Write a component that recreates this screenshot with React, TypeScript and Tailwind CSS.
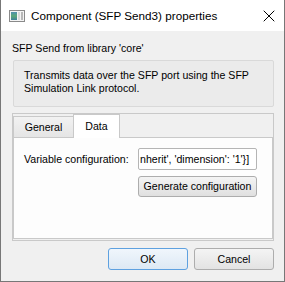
import { X } from 'lucide-react'

function WindowIcon() {
  return (
    <svg width="16" height="12" viewBox="0 0 16 12" className="shrink-0">
      <rect x="0.5" y="0.5" width="15" height="11" fill="#f4f4f4" stroke="#8a8a8a" />
      <defs>
        <linearGradient id="ic" x1="0" y1="0" x2="0" y2="1">
          <stop offset="0" stopColor="#4f8fb0" />
          <stop offset="0.5" stopColor="#5aa878" />
          <stop offset="1" stopColor="#3f7f9a" />
        </linearGradient>
      </defs>
      <rect x="2" y="2" width="6" height="8" fill="url(#ic)" />
      <rect x="9" y="2" width="2" height="8" fill="#d8d8d8" />
      <rect x="12" y="2" width="2" height="8" fill="#b8b8b8" />
    </svg>
  )
}

export default function App() {
  const font = { fontFamily: '"Liberation Sans", Arial, sans-serif' }
  return (
    <div className="w-[285px] h-[282px] flex flex-col border-x border-b border-[#777777] bg-[#f0f0f0] text-black overflow-hidden" style={font}>
      {/* title bar */}
      <div className="h-[31px] bg-white flex items-center pl-[8px] pr-[5px] shrink-0">
        <WindowIcon />
        <span className="ml-[6px] text-[11.7px] leading-none">Component (SFP Send3) properties</span>
        <X className="ml-auto w-[20px] h-[20px]" strokeWidth={1.2} />
      </div>

      <div className="flex-1 pl-[11px] pr-[10px] pt-[11px] text-[10.6px] leading-[13px]">
        <div>SFP Send from library 'core'</div>

        <div className="mt-[5px] ml-[1px] h-[47px] border border-[#d9d9d9] rounded-[2px] bg-[#ebebeb] pl-[10px] pt-[8px]">
          Transmits data over the SFP port using the SFP
          <br />
          Simulation Link protocol.
        </div>

        <div className="mt-[6px] h-[128px] border border-[#c9c9c9] flex flex-col">
          <div className="flex items-end h-[23px] shrink-0">
            <div className="w-[61px] h-[21px] border border-b-0 border-[#c9c9c9] bg-gradient-to-b from-[#f2f2f2] to-[#e5e5e5] flex items-center justify-center">
              General
            </div>
            <div className="w-[47px] h-[24px] -ml-[1px] -mb-[1px] relative z-10 border border-b-0 border-[#c9c9c9] bg-white flex items-center justify-center pb-[1px]">
              Data
            </div>
          </div>
          <div className="h-[102px] border border-[#c9c9c9] bg-[#fdfdfd] pl-[10px] pr-[15px] pt-[10px]">
            <div className="flex items-center">
              <span className="w-[114px]">Variable configuration:</span>
              <div className="w-[119px] h-[22px] border border-[#b5b5b5] rounded-[2px] bg-white flex items-center whitespace-nowrap pl-[1px]">
                nherit', 'dimension': '1'{"}"}]
              </div>
            </div>
            <div className="flex justify-end mt-[6px]">
              <div className="w-[119px] h-[21px] border border-[#adadad] rounded-[3px] bg-gradient-to-b from-[#f4f4f4] to-[#e0e0e0] flex items-center justify-center">
                Generate configuration
              </div>
            </div>
          </div>
        </div>

        <div className="flex justify-end gap-[6px] mt-[7px]">
          <div className="w-[80px] h-[22px] border border-[#5ea1e0] rounded-[3px] bg-gradient-to-b from-[#f0f6fc] to-[#dde9f4] flex items-center justify-center">
            OK
          </div>
          <div className="w-[80px] h-[22px] border border-[#adadad] rounded-[3px] bg-gradient-to-b from-[#f4f4f4] to-[#e3e3e3] flex items-center justify-center">
            Cancel
          </div>
        </div>
      </div>
    </div>
  )
}
